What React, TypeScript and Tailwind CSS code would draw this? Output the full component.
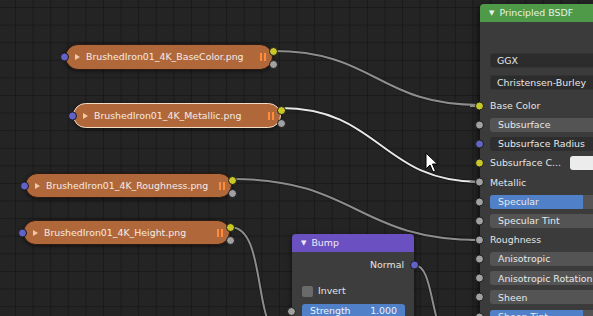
import React from 'react';

const font = { fontFamily: '"DejaVu Sans", "Liberation Sans", sans-serif' };

type SocketColor = 'yellow' | 'gray' | 'purple';

const socketClass: Record<SocketColor, string> = {
  yellow: 'bg-[#c7c729]',
  gray: 'bg-[#a1a1a1]',
  purple: 'bg-[#6363c7]',
};

const Socket = ({ color, className }: { color: SocketColor; className: string }) => (
  <span className={`absolute w-[9px] h-[9px] rounded-full border border-[#1b1b1b] ${socketClass[color]} ${className}`} />
);

const imageNodes = [
  { label: 'BrushedIron01_4K_BaseColor.png', pos: 'left-[65px] top-[44px] w-[208px] h-[26px]', selected: false },
  { label: 'BrushedIron01_4K_Metallic.png', pos: 'left-[73px] top-[103px] w-[208px] h-[25px]', selected: true },
  { label: 'BrushedIron01_4K_Roughness.png', pos: 'left-[25px] top-[173px] w-[207px] h-[25px]', selected: false },
  { label: 'BrushedIron01_4K_Height.png', pos: 'left-[23px] top-[220px] w-[207px] h-[25px]', selected: false },
];

const ImageNode = ({ label, pos, selected }: { label: string; pos: string; selected: boolean }) => (
  <div
    className={`absolute ${pos} rounded-full bg-[#b0673a] flex items-center pl-[9px] pr-[6px] shadow-[0_1px_4px_rgba(0,0,0,0.6)] border ${
      selected ? 'border-[#f2dcc4]' : 'border-[#2a1b12]'
    }`}
  >
    <span className="w-0 h-0 border-y-[3px] border-y-transparent border-l-[5px] border-l-[#f0c9a8] mr-[6px]" />
    <span className="text-[#f4ece6] text-[9.4px] leading-none flex-1 whitespace-nowrap">{label}</span>
    <span className="flex gap-[2px]">
      <span className="w-[2px] h-[8px] bg-[#ff8b3d]" />
      <span className="w-[2px] h-[8px] bg-[#ff8b3d]" />
    </span>
    <Socket color="purple" className="left-[-6px] top-1/2 -translate-y-1/2" />
    <Socket color="yellow" className="right-[-6px] top-[2px]" />
    <Socket color="gray" className="right-[-6px] top-[15px]" />
  </div>
);

type Row = {
  label: string;
  kind: 'label' | 'slider' | 'vector' | 'color';
  socket: SocketColor;
  fill?: boolean;
  linked?: boolean;
};

const rows: Row[] = [
  { label: 'Base Color', kind: 'label', socket: 'yellow', linked: true },
  { label: 'Subsurface', kind: 'slider', socket: 'gray' },
  { label: 'Subsurface Radius', kind: 'vector', socket: 'purple' },
  { label: 'Subsurface C...', kind: 'color', socket: 'yellow' },
  { label: 'Metallic', kind: 'label', socket: 'gray', linked: true },
  { label: 'Specular', kind: 'slider', socket: 'gray', fill: true },
  { label: 'Specular Tint', kind: 'slider', socket: 'gray' },
  { label: 'Roughness', kind: 'label', socket: 'gray', linked: true },
  { label: 'Anisotropic', kind: 'slider', socket: 'gray' },
  { label: 'Anisotropic Rotation', kind: 'slider', socket: 'gray' },
  { label: 'Sheen', kind: 'slider', socket: 'gray' },
  { label: 'Sheen Tint', kind: 'slider', socket: 'gray', fill: true },
];

const InputRow = ({ row }: { row: Row }) => (
  <div className="relative h-[19.2px] flex items-center pl-[10px]">
    {row.linked && <span className="absolute left-[-10px] top-1/2 w-[8px] h-[2px] -translate-y-1/2 bg-[#8c8c8c]" />}
    <Socket color={row.socket} className="left-[-5px] top-1/2 -translate-y-1/2" />
    {row.kind === 'label' && <span className="text-[#e4e4e4]">{row.label}</span>}
    {row.kind === 'color' && (
      <>
        <span className="text-[#e4e4e4] w-[80px]">{row.label}</span>
        <span className="h-[14px] w-[60px] rounded-[3px] bg-[#ececec]" />
      </>
    )}
    {(row.kind === 'slider' || row.kind === 'vector') && (
      <div
        className={`relative h-[14px] w-[186px] shrink-0 rounded-[3px] overflow-hidden flex items-center pl-[8px] ${
          row.kind === 'vector' ? 'bg-[#2e2e2e]' : 'bg-[#545454]'
        }`}
      >
        {row.fill && <span className="absolute left-0 top-0 h-full w-[93px] bg-[#5080c8]" />}
        <span className="relative text-[#e8e8e8]">{row.label}</span>
      </div>
    )}
  </div>
);

const Principled = () => (
  <div className="absolute left-[480px] top-[4px] w-[200px] rounded-t-[4px] bg-[#3b3b3b] shadow-[-2px_2px_6px_rgba(0,0,0,0.6)] text-[9.4px] leading-none">
    <div className="h-[18px] rounded-t-[4px] bg-[#4e9a48] flex items-center pl-[9px] gap-[5px] text-[#e8f2e6]">
      <span className="text-[7px]">▼</span>
      <span>Principled BSDF</span>
    </div>
    <div className="h-[31px]" />
    <div className="flex flex-col gap-[7px] pl-[10px]">
      <div className="h-[15px] w-[186px] rounded-[3px] bg-[#2c2c2c] border border-[#333] flex items-center pl-[6px] text-[#e8e8e8]">GGX</div>
      <div className="h-[15px] w-[186px] rounded-[3px] bg-[#2c2c2c] border border-[#333] flex items-center pl-[6px] text-[#e8e8e8]">Christensen-Burley</div>
    </div>
    <div className="h-[6px]" />
    {rows.map((row) => (
      <InputRow key={row.label} row={row} />
    ))}
  </div>
);

const Bump = () => (
  <div className="absolute left-[292px] top-[234px] w-[122px] h-[100px] rounded-t-[4px] bg-[#3d3d3d] shadow-[0_2px_6px_rgba(0,0,0,0.6)] text-[9.4px] leading-none">
    <div className="h-[18px] rounded-t-[4px] bg-[#6b50c2] flex items-center pl-[9px] gap-[5px] text-[#eeeaf8]">
      <span className="text-[7px]">▼</span>
      <span>Bump</span>
    </div>
    <div className="relative h-[26px] flex items-center justify-end pr-[10px] text-[#e4e4e4]">
      Normal
      <Socket color="purple" className="right-[-5px] top-1/2 -translate-y-1/2" />
    </div>
    <div className="h-[6px]" />
    <div className="h-[14px] flex items-center gap-[5px] pl-[10px] text-[#e4e4e4]">
      <span className="w-[11px] h-[11px] rounded-[2px] bg-[#6a6a6a]" />
      Invert
    </div>
    <div className="h-[6px]" />
    <div className="relative pl-[10px]">
      <div className="h-[14px] w-[103px] rounded-[3px] bg-[#5080c8] flex items-center justify-between px-[8px] text-[#eef2fa]">
        <span>Strength</span>
        <span>1.000</span>
      </div>
      <Socket color="gray" className="left-[-5px] top-[3px]" />
    </div>
  </div>
);

const Wires = () => (
  <svg className="absolute inset-0" width="593" height="316" viewBox="0 0 593 316" fill="none">
    <g stroke="#161616" strokeWidth="3.5" strokeLinecap="round">
      <path d="M273 51 C376 51 377 105 480 105" />
      <path d="M233 179 C356 179 357 240 480 240" />
      <path d="M230 227 C262 227 255 300 272 330" />
      <path d="M414 265 C430 265 430 300 440 330" />
      <path d="M281 108 C380 108 381 182 480 182" />
    </g>
    <g stroke="#8d8d8d" strokeWidth="2" strokeLinecap="round">
      <path d="M273 51 C376 51 377 105 480 105" />
      <path d="M233 179 C356 179 357 240 480 240" />
      <path d="M230 227 C262 227 255 300 272 330" />
      <path d="M414 265 C430 265 430 300 440 330" />
    </g>
    <path d="M281 108 C380 108 381 182 480 182" stroke="#e8e8e8" strokeWidth="2" strokeLinecap="round" />
  </svg>
);

const Cursor = () => (
  <svg className="absolute left-[425px] top-[152px]" width="14" height="22" viewBox="0 0 14 22">
    <path d="M1 1 L1 17 L5 13 L8 20 L10.5 19 L7.5 12 L12.5 12 Z" fill="#ffffff" stroke="#000000" strokeWidth="1" strokeLinejoin="round" />
  </svg>
);

export default function App() {
  return (
    <div
      className="relative w-[593px] h-[316px] overflow-hidden bg-[#242424] bg-[linear-gradient(to_right,#1a1a1a_1px,transparent_1px),linear-gradient(to_bottom,#1a1a1a_1px,transparent_1px)] [background-size:17.6px_17.6px] [background-position:15px_7px]"
      style={font}
    >
      <Wires />
      {imageNodes.map((n) => (
        <ImageNode key={n.label} {...n} />
      ))}
      <Bump />
      <Principled />
      <Cursor />
    </div>
  );
}
